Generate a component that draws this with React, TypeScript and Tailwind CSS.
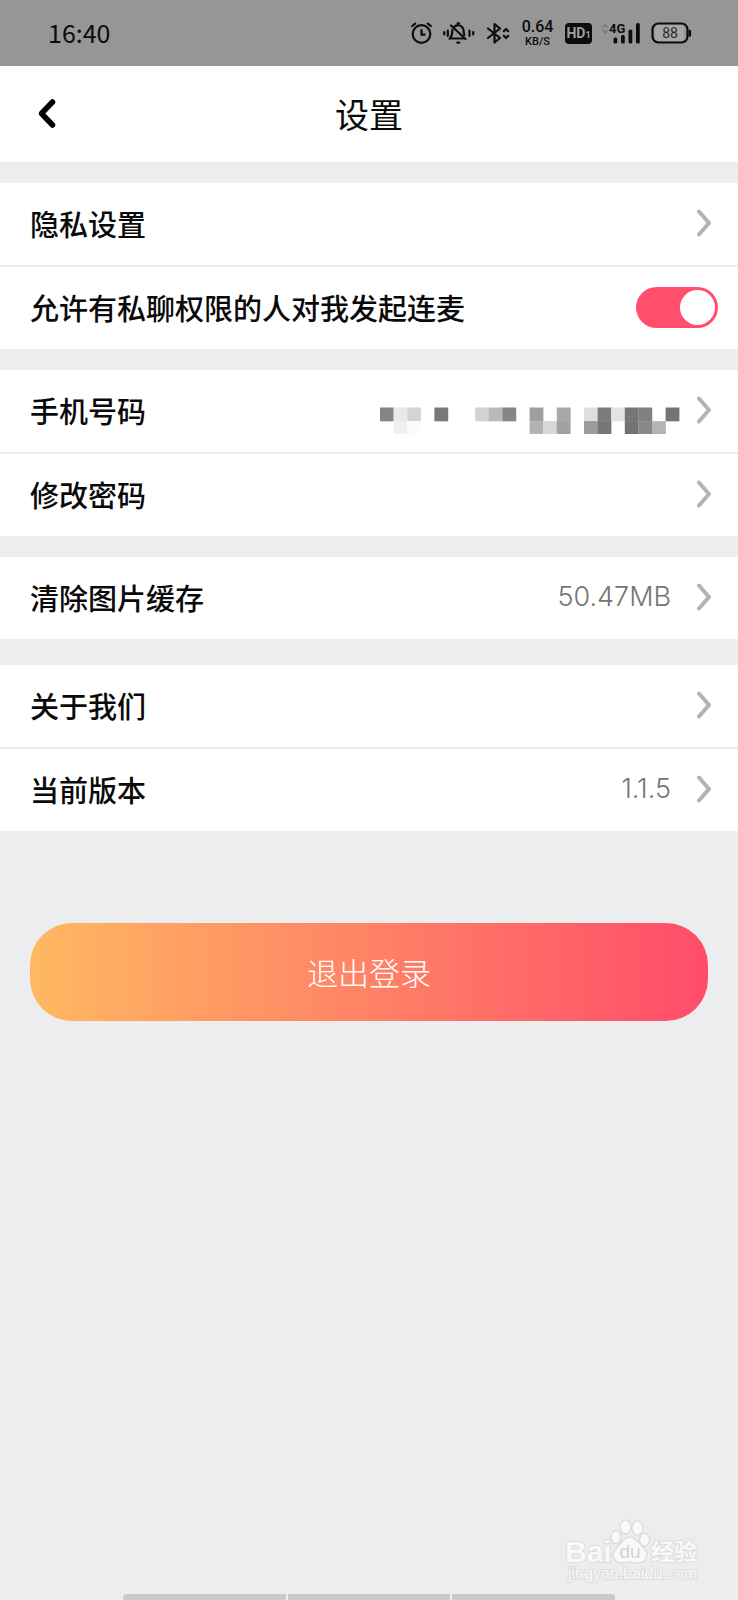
import { useState } from 'react';
import type { ReactNode } from 'react';

const AlarmIcon = () => (
  <svg width="22" height="24" viewBox="0 0 22 24" fill="none" stroke="currentColor" strokeWidth="2.2" strokeLinecap="round">
    <circle cx="10.5" cy="13" r="8.8" />
    <path d="M10.5 9v4.6h3.2" />
    <path d="M1.2 5 4.2 2.6M19.800 5l-3-2.400" />
  </svg>
);

const VibrateBellIcon = () => (
  <svg width="33" height="24" viewBox="0 0 33 24" fill="none" stroke="currentColor" strokeWidth="2.2" strokeLinecap="round">
    <path d="M1.2 11v2.500M4.800 9.500v5.500M26.500 9.500v5.500M30.200 11v2.500" />
    <path d="M11 6.200c2.600-2.800 6.600-2.600 8.600.4 1.300 2 .8 4.900 1.700 7.400M9.500 8.700c0 3.600-.6 6.300-2.400 8.800h13" />
    <path d="M8 4.500l14.500 13.500M14.600 2.300h1.500" />
    <path d="M14.300 21.600h2" />
  </svg>
);

const BluetoothIcon = () => (
  <svg width="24" height="24" viewBox="0 0 24 24" fill="none" stroke="currentColor" strokeWidth="2.2" strokeLinecap="round" strokeLinejoin="round">
    <path d="M2 7.500l12 9.500-5.500 4.500V3L14 7.500 2 17" />
    <path d="M17.800 10.200l2.200-2.200 2.200 2.200M17.800 14.800l2.200 2.200 2.200-2.200" />
  </svg>
);

const SignalIcon = () => (
  <svg width="39" height="24" viewBox="0 0 39 24" fill="currentColor">
    <path d="M.8 6.500l2.400-3 2.400 3M.8 9l2.400 3 2.400-3" fill="none" stroke="#7b7b7b" strokeWidth="1.500" />
    <text x="7" y="12" fontSize="13" fontWeight="700" className="font-['Roboto',sans-serif]">4G</text>
    <rect x="11.500" y="16.500" width="3.800" height="6" rx="1.500" />
    <rect x="19" y="14" width="3.800" height="8.500" rx="1.500" />
    <rect x="26.500" y="8.500" width="3.800" height="14" rx="1.500" />
    <rect x="34" y="2" width="3.800" height="20.500" rx="1.500" />
  </svg>
);

const BatteryIcon = () => (
  <svg width="41" height="24" viewBox="0 0 41 24">
    <rect x="4" y="4" width="29" height="16" rx="3" fill="#a6a6a6" />
    <rect x="1.500" y="2.500" width="35" height="19" rx="6" fill="none" stroke="currentColor" strokeWidth="2.2" />
    <path d="M38.800 10v4.500" stroke="currentColor" strokeWidth="2.500" strokeLinecap="round" />
    <text x="19" y="17" fontSize="14" textAnchor="middle" fill="#2a2a2a" className="font-['Roboto',sans-serif]">88</text>
  </svg>
);

const StatusBar = () => (
  <div className="flex h-[66px] items-center justify-between bg-[#969696] pl-12 pr-[46px] text-[#0c0c0c]">
    <time className="pb-0.5 text-[25px] leading-8">16:40</time>
    <div className="flex items-center gap-2.5">
      <AlarmIcon />
      <VibrateBellIcon />
      <BluetoothIcon />
      <div className="flex w-[35px] flex-col items-center font-['Roboto',sans-serif] font-medium">
        <span className="text-[16px] leading-[17px]">0.64</span>
        <span className="text-[11px] leading-[13px]">KB/S</span>
      </div>
      <span className="flex h-[21px] w-[27px] items-center justify-center rounded bg-[#0c0c0c] font-['Roboto',sans-serif] font-bold leading-none text-[#a0a0a0]">
        <span className="text-[14px]">HD</span>
        <span className="pt-1 text-[9px]">1</span>
      </span>
      <SignalIcon />
      <BatteryIcon />
    </div>
  </div>
);

const Chevron = () => (
  <svg width="16" height="28" viewBox="0 0 16 28" fill="none" stroke="#adb5b8" strokeWidth="4" strokeLinecap="round" strokeLinejoin="round">
    <path d="M3 2.500 13 14 3 25.500" />
  </svg>
);

// [column, row, colour] of each block covering the phone number
const blocks: [number, number, string][] = [
  [0, 0, '#858585'], [1, 0, '#e9e9e9'], [2, 0, '#d5d4d5'], [4, 0, '#777977'],
  [7, 0, '#d2d2d2'], [8, 0, '#b9b9b9'], [9, 0, '#868686'], [11, 0, '#9f9f9f'],
  [13, 0, '#a7a7a7'], [15, 0, '#dfdfe0'], [16, 0, '#7c7b7e'], [17, 0, '#e3e3e3'],
  [18, 0, '#757775'], [19, 0, '#807f81'], [21, 0, '#737573'],
  [1, 1, '#efeff0'], [2, 1, '#fdfafd'], [11, 1, '#b3b2b4'], [12, 1, '#d8d8d8'],
  [13, 1, '#a1a1a1'], [15, 1, '#9c9b9c'], [16, 1, '#757775'], [18, 1, '#727472'],
  [19, 1, '#888888'], [20, 1, '#b4b3b5'],
];

const MaskedPhone = () => (
  <svg width="300" height="48" viewBox="0 0 300 48" role="img" aria-label="手机号码">
    {blocks.map(([col, row, fill]) => (
      <rect key={`${col}-${row}`} x={col * 13.6} y={21.5 + row * 13.6} width="13.8" height="13.8" fill={fill} />
    ))}
  </svg>
);

interface RowProps {
  label: string;
  children?: ReactNode;
}

const Row = ({ label, children }: RowProps) => (
  <button type="button" className="flex h-[82px] w-full items-center bg-white pb-0.5 pl-[30px] pr-[26px] text-left">
    <span className="flex-1 text-[29px] font-medium leading-10">{label}</span>
    {children}
    <Chevron />
  </button>
);

const Value = ({ children }: { children: ReactNode }) => (
  <span className="mr-[25px] font-['Inter',sans-serif] text-[27px] font-light leading-10 text-[#757575]">{children}</span>
);

const Group = ({ children }: { children: ReactNode }) => (
  <section className="flex flex-col gap-0.5">{children}</section>
);

const Watermark = () => (
  <svg
    className="pointer-events-none absolute bottom-4 right-9 font-['Liberation_Sans','Noto_Sans_CJK_SC',sans-serif]"
    width="138"
    height="66"
    viewBox="0 0 138 66"
    fill="#f8f9f9"
    stroke="#dcddde"
    strokeWidth="1.5"
  >
    <g paintOrder="stroke" strokeWidth="2">
      <text x="1" y="44" fontSize="30" fontWeight="700">Bai</text>
      <text x="87" y="42" fontSize="23" fontWeight="700">经验</text>
      <text x="4" y="61" fontSize="16">jingyan.baidu.com</text>
    </g>
    <ellipse cx="52" cy="19" rx="5" ry="6.500" />
    <ellipse cx="61.500" cy="9" rx="5.500" ry="7" />
    <ellipse cx="73.500" cy="10" rx="5.500" ry="7" />
    <ellipse cx="80.500" cy="21.500" rx="5" ry="6.500" />
    <path d="M66 19c5 0 8 4 11 8 4 4 6 6 6 10 0 5-4 8-9 8-3 0-5-1-8-1s-5 1-8 1c-5 0-9-3-9-8 0-4 3-6 6-10 3-4 6-8 11-8z" />
    <text x="66" y="40" fontSize="19" textAnchor="middle" fill="#d2d3d4" stroke="none">du</text>
  </svg>
);

const App = () => {
  const [allowCall, setAllowCall] = useState(true);

  return (
    <div className="relative flex min-h-screen flex-col bg-[#ecedef] font-['Noto_Sans_CJK_SC',sans-serif] text-[#0a0a0a]">
      <StatusBar />
      <header className="grid h-24 grid-cols-[1fr_auto_1fr] items-center bg-white px-[30px]">
        <button type="button" aria-label="返回" className="flex h-12 w-12 items-center pl-1.5">
          <svg width="22" height="34" viewBox="0 0 22 34" fill="none" stroke="#000" strokeWidth="5.5" strokeLinecap="round" strokeLinejoin="round">
            <path d="M16.500 5 5.500 16.500l11 11.500" />
          </svg>
        </button>
        <h1 className="text-[34px] leading-[48px]">设置</h1>
      </header>

      <main className="flex flex-col pt-[21px]">
        <div className="flex flex-col gap-[21px]">
          <Group>
            <Row label="隐私设置" />
            <div className="flex h-[82px] items-center justify-between bg-white pb-0.5 pl-[30px] pr-5">
              <label htmlFor="allow-call" className="text-[29px] font-medium leading-10">
                允许有私聊权限的人对我发起连麦
              </label>
              <input
                id="allow-call"
                type="checkbox"
                role="switch"
                checked={allowCall}
                onChange={(e) => setAllowCall(e.target.checked)}
                className="flex h-[41px] w-[82px] shrink-0 cursor-pointer appearance-none items-center rounded-full bg-gray-300 p-[3px] before:h-[35px] before:w-[35px] before:rounded-full before:bg-white before:content-[''] checked:justify-end checked:bg-[#ff4f6c]"
              />
            </div>
          </Group>
          <Group>
            <Row label="手机号码">
              <span className="mr-4">
                <MaskedPhone />
              </span>
            </Row>
            <Row label="修改密码" />
          </Group>
          <Group>
            <Row label="清除图片缓存">
              <Value>50.47MB</Value>
            </Row>
          </Group>
        </div>
        <div className="mt-[26px]">
          <Group>
            <Row label="关于我们" />
            <Row label="当前版本">
              <Value>1.1.5</Value>
            </Row>
          </Group>
        </div>
        <div className="px-[30px] pt-[92px]">
          <button
            type="button"
            className="h-[98px] w-full rounded-[42px] bg-linear-to-r/srgb from-[#ffb861] to-[#ff4c6a] text-[31px] font-light text-white"
          >
            退出登录
          </button>
        </div>
      </main>

      <div className="mx-auto mt-auto flex h-1.5 w-2/3 gap-0.5 overflow-hidden rounded-t">
        <div className="flex-1 bg-[#c9cacb]" />
        <div className="flex-1 bg-[#c9cacb]" />
        <div className="flex-1 bg-[#c9cacb]" />
      </div>
      <Watermark />
    </div>
  );
};

export default App;
